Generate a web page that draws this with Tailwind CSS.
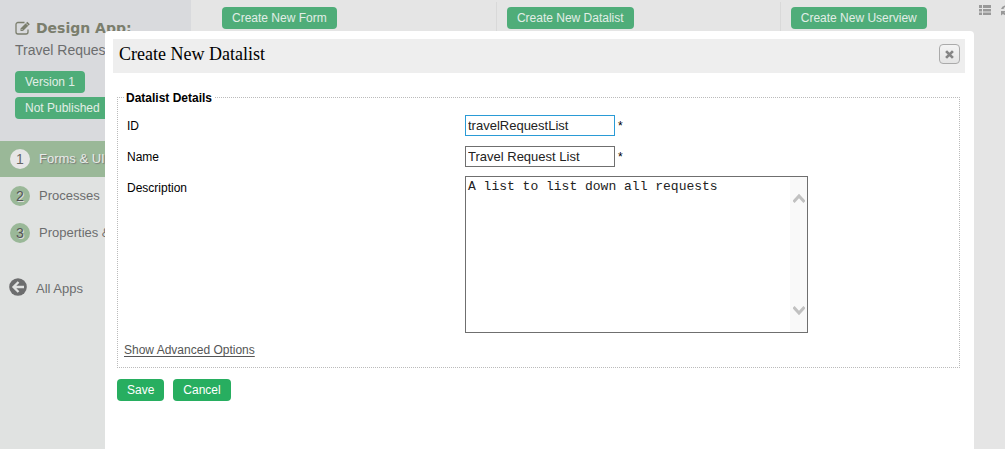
<!DOCTYPE html>
<html lang="en">
<head>
  <meta charset="UTF-8" />
  <meta name="viewport" content="width=device-width, initial-scale=1.0"/>
  <title>Create New Datalist</title>
  <script src="https://cdn.jsdelivr.net/npm/@tailwindcss/browser@4"></script>
</head>
<body class="h-screen overflow-hidden bg-[#e5e5e5] font-['Liberation_Sans',Arial,sans-serif] text-xs text-black">
  <div class="flex h-full">
    <!-- Sidebar -->
    <aside class="w-[191px] shrink-0 flex flex-col bg-[#e0e2e1] text-[#6c6d6e]">
      <div class="h-[141px] px-[15px] pt-[18px] bg-[#d9dadd]">
        <h1 class="flex items-center gap-[5px] h-5 font-['DejaVu_Sans',sans-serif] text-sm font-bold text-[#7b7e6d] whitespace-nowrap">
          <svg class="w-4 h-4 shrink-0" viewBox="0 0 16 16" fill="none" stroke="currentColor">
            <path d="M9.500 2.500H3A2 2 0 0 0 1 4.500V12a2 2 0 0 0 2 2h8a2 2 0 0 0 2-2V9.500" stroke-width="1.300"/>
            <path d="M5.500 11V8.500L12.300 1.700l2.500 2.500L8 11z" fill="currentColor" stroke="none"/>
            <path d="M6.500 9l1.200 1.200M11 3.300l2.300 2.300" stroke="#d9dadd" stroke-width=".8"/>
          </svg>
          Design App:
        </h1>
        <p class="h-6 leading-6 text-sm whitespace-nowrap">Travel Request</p>
        <div class="flex flex-col items-start gap-1 pt-[9px]">
          <button class="h-[22px] px-[10px] rounded bg-[#4fad79] text-[#e2eee7]">Version 1</button>
          <button class="h-[22px] px-[10px] rounded bg-[#4fad79] text-[#e2eee7]">Not Published</button>
        </div>
      </div>
      <nav class="text-[13px] whitespace-nowrap">
        <a href="#" class="flex items-center gap-[9px] h-9 pl-[10px] bg-[#9ab898] text-[#e8ebe8] text-shadow-[1px_1px_1px_#777777]">
          <span class="w-5 h-5 rounded-full bg-[#e6e6e6] text-[#666] text-sm leading-5 text-center text-shadow-none">1</span>
          Forms &amp; UI
        </a>
        <a href="#" class="flex items-center gap-[9px] h-[37px] pl-[10px]">
          <span class="w-5 h-5 rounded-full bg-[#9ab898] text-[#555] text-sm leading-5 text-center text-shadow-[1px_1px_0px_#dddddd]">2</span>
          Processes
        </a>
        <a href="#" class="flex items-center gap-[9px] h-[37px] pl-[10px]">
          <span class="w-5 h-5 rounded-full bg-[#9ab898] text-[#555] text-sm leading-5 text-center text-shadow-[1px_1px_0px_#dddddd]">3</span>
          Properties &amp; Export
        </a>
        <a href="#" class="flex items-center gap-[9px] h-9 mt-5 pl-[9px]">
          <svg class="w-[18px] h-[18px] mb-1" viewBox="0 0 18 18" fill="none">
            <circle cx="9" cy="9" r="8.800" fill="#6c6d6e"/>
            <path d="M15 9H5M9.500 4L4.500 9l5 5" stroke="#e0e2e1" stroke-width="2.300"/>
          </svg>
          All Apps
        </a>
      </nav>
    </aside>

    <main class="flex-1 min-w-0 flex items-start pl-[21px]">
      <div class="flex-1 grid grid-cols-[3fr_3fr_2fr] pt-[2px]">
        <div class="h-40 pl-[10px] pt-[5px]">
          <button class="h-[22px] px-[10px] rounded bg-[#4fad79] text-[#e2eee7] whitespace-nowrap">Create New Form</button>
        </div>
        <div class="h-40 pl-[10px] pt-[5px] border-l border-[#d9d9d9]">
          <button class="h-[22px] px-[10px] rounded bg-[#4fad79] text-[#e2eee7] whitespace-nowrap">Create New Datalist</button>
        </div>
        <div class="h-40 pl-[10px] pt-[5px] border-l border-[#d9d9d9]">
          <button class="h-[22px] px-[10px] rounded bg-[#4fad79] text-[#e2eee7] whitespace-nowrap">Create New Userview</button>
        </div>
      </div>
      <div class="w-9 shrink-0 flex gap-[10px] pl-[10px] pt-1 text-[#999]">
        <button aria-label="List" class="shrink-0">
          <svg class="w-3 h-3" viewBox="0 0 12 12" fill="currentColor">
            <path d="M0 1h3v3H0zM4 1h8v3H4zM0 5h3v2.500H0zM4 5h8v2.500H4zM0 8.500h3v2.500H0zM4 8.500h8v2.500H4z"/>
          </svg>
        </button>
        <button aria-label="Refresh" class="shrink-0">
          <svg class="w-3 h-3" viewBox="0 0 12 12" fill="currentColor">
            <path d="M0 5A6 5 0 0 1 9.500 2.200L11 1v4H7l1.200-1.300A3.300 3.300 0 0 0 2.500 5zM12 7A6 5 0 0 1 2 10L0 11.500V7h4.500L3.500 8.500A3.300 3.300 0 0 0 9.500 7z"/>
          </svg>
        </button>
      </div>
    </main>
  </div>

  <!-- Dialog -->
  <div class="fixed inset-0 flex pt-[31px] pl-[105px] pr-[31px]">
    <div role="dialog" aria-labelledby="dialogTitle" class="flex-1 min-w-0 rounded-t bg-white pt-2 pl-2 pr-[9px]">
      <header class="flex items-center justify-between h-[34px] pl-[6px] pr-[5px] bg-[#eee]">
        <h2 id="dialogTitle" class="font-['Liberation_Serif',serif] text-lg leading-8 pb-1">Create New Datalist</h2>
        <button id="closeDialog" aria-label="Close" class="flex items-center justify-center w-[21px] h-[20px] mb-1 rounded border border-[#aaa] bg-linear-to-b from-[#f4f4f4] to-[#e4e4e4]">
          <svg class="w-[9px] h-[9px]" viewBox="0 0 10 10" stroke="#858585" stroke-width="3">
            <path d="M1.200 1.200l7.600 7.600M8.800 1.200L1.200 8.800"/>
          </svg>
        </button>
      </header>

      <form id="datalistForm" class="pl-1 pr-[5px] pt-4">
        <fieldset class="min-w-0 pl-[6px] pr-2 pb-[9px] border border-dotted border-[#bbb]">
          <legend class="px-[2px] h-4 leading-[18px] font-bold">Datalist Details</legend>
          <div class="flex items-start pl-[3px] pt-[10px]">
            <label for="datalistId" class="w-[338px] leading-[22px]">ID</label>
            <input type="text" id="datalistId" value="travelRequestList" required
              class="w-[150px] h-[21px] px-[2px] border border-[#2a9bd6] bg-white text-[13px] text-[#222] outline-none">
            <span class="pl-[3px] leading-[22px]">*</span>
          </div>
          <div class="flex items-start pl-[3px] pt-[9px]">
            <label for="datalistName" class="w-[338px] leading-[22px]">Name</label>
            <input type="text" id="datalistName" value="Travel Request List" required
              class="w-[150px] h-[21px] px-[2px] border border-[#6f6f6f] bg-white text-[13px] text-[#222] outline-none">
            <span class="pl-[3px] leading-[22px]">*</span>
          </div>
          <div class="flex items-start pl-[3px] pt-2">
            <label for="description" class="w-[338px] leading-6">Description</label>
            <div class="flex w-[343px] h-[157px] border border-[#6f6f6f]">
              <textarea id="description" class="flex-1 min-w-0 px-[2px] pt-[2px] resize-none overflow-hidden outline-none font-['Liberation_Mono',monospace] text-[13px] leading-4 text-[#222]">A list to list down all requests</textarea>
              <div class="flex flex-col justify-between items-center w-[17px] py-4 bg-[#f9f9f9]">
                <svg class="w-3 h-3" viewBox="0 0 12 12" fill="none" stroke="#c1c1c1" stroke-width="3"><path d="M.5 9L6 3l5.500 6"/></svg>
                <svg class="w-3 h-3" viewBox="0 0 12 12" fill="none" stroke="#c1c1c1" stroke-width="3"><path d="M.5 3L6 9l5.500-6"/></svg>
              </div>
            </div>
          </div>
          <a href="#" class="inline-block mt-[9px] leading-4 text-[#555] underline underline-offset-2">Show Advanced Options</a>
        </fieldset>
        <div class="flex gap-[9px] pt-[11px]">
          <button type="submit" class="h-[22px] px-[10px] rounded bg-[#27ae60] text-white">Save</button>
          <button type="button" class="h-[22px] px-[10px] rounded bg-[#27ae60] text-white">Cancel</button>
        </div>
      </form>
    </div>
  </div>
</body>
</html>
